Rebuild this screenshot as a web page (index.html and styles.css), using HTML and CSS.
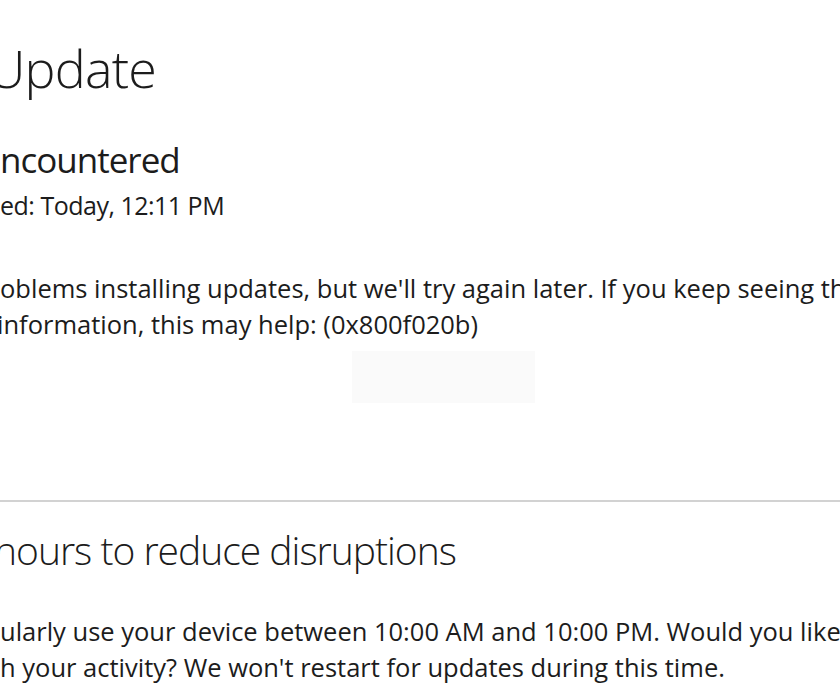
FILE: index.html
```html
<!DOCTYPE html>
<html>
<head>
    <title>Windows Update</title>
    <meta name="viewport" content="width=device-width, initial-scale=1.0">
    <link rel="stylesheet" href="styles.css">
</head>
<body>
    <div class="page">
        <h1 class="title">Update</h1>

        <div class="status">
            <h2 class="status-heading">ncountered</h2>
            <div class="status-time">ed: Today, 12:11 PM</div>
        </div>

        <p class="message">
            <span class="line line-1">oblems installing updates, but we'll try again later. If you keep seeing this</span>
            <span class="line line-2">information, this may help: (0x800f020b)</span>
        </p>

        <div class="ghost-button"></div>

        <hr class="divider">

        <h2 class="section-heading">hours to reduce disruptions</h2>

        <p class="message suggestion">
            <span class="line line-3">ularly use your device between 10:00 AM and 10:00 PM. Would you like</span>
            <span class="line line-4">h your activity? We won't restart for updates during this time.</span>
        </p>
    </div>
</body>
</html>
```

FILE: styles.css
```css
body {
    margin: 0;
    background-color: white;
    color: #1c1c1c;
    font-family: 'Open Sans', 'Noto Sans', sans-serif;
    overflow: hidden;
}

.page {
    width: 840px;
    height: 700px;
    overflow: hidden;
    padding-top: 38px;
    box-sizing: border-box;
}

.title {
    margin: 0 0 0 -12px;
    font-size: 52px;
    font-weight: 300;
    line-height: 60px;
    letter-spacing: -0.8px;
    white-space: nowrap;
}

.status {
    margin-top: 40px;
}

.status-heading {
    margin: 0;
    font-size: 35px;
    font-weight: 400;
    line-height: 44px;
    letter-spacing: -1px;
    white-space: nowrap;
}

.status-time {
    font-size: 25px;
    line-height: 32px;
    margin-top: 7px;
    letter-spacing: -0.5px;
    white-space: nowrap;
}

.message {
    margin: 49px 0 0;
    font-size: 25.5px;
    line-height: 36px;
    letter-spacing: 0;
}

.line {
    display: block;
    white-space: nowrap;
}

.line-2 {
    margin-left: -3px;
}

.ghost-button {
    margin: 9px 0 0 352px;
    width: 183px;
    height: 52px;
    background-color: #fafafa;
}

.divider {
    margin: 97px 0 0;
    border: none;
    height: 2px;
    background-color: #d2d2d2;
}

.section-heading {
    margin: 24px 0 0 -6px;
    font-size: 39px;
    font-weight: 300;
    line-height: 48px;
    letter-spacing: -1px;
    white-space: nowrap;
}

.suggestion {
    margin-top: 39px;
}
```
